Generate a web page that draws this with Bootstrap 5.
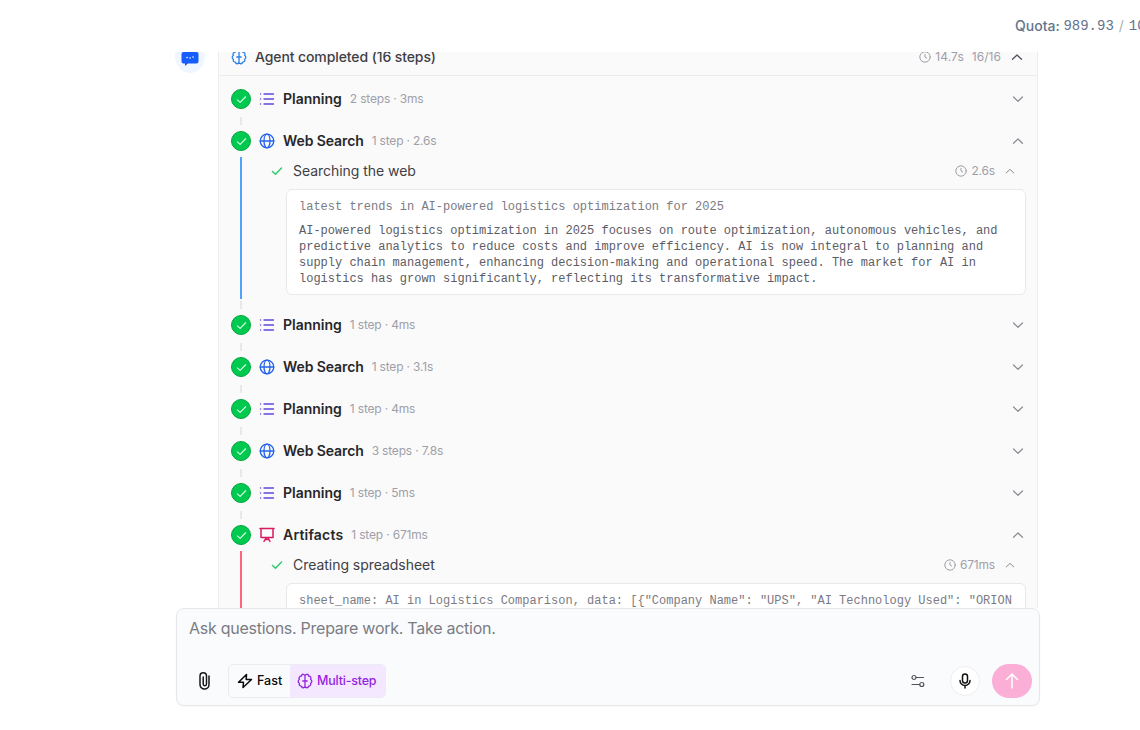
<!DOCTYPE html>
<html lang="en">
<head>
<meta charset="utf-8">
<meta name="viewport" content="width=device-width, initial-scale=1">
<title>Agent chat</title>
<link href="https://cdn.jsdelivr.net/npm/bootstrap@5.3.0/dist/css/bootstrap.min.css" rel="stylesheet">
<style>
body{font-family:Inter,"Liberation Sans",sans-serif;font-size:14px;line-height:20px;color:#3f3f46;background:#fff;height:730px;overflow:hidden}
svg{fill:none;stroke:currentColor;stroke-width:1.5;stroke-linecap:round;stroke-linejoin:round;display:block;flex:none}
.topbar{height:52px;padding-left:1015px;color:#64748b;overflow:hidden}
.topbar .num{font-family:"Liberation Mono",monospace}
.slash{color:#a8b0bb;padding:0 1px}
.feed{height:556px;padding-left:175px;overflow:hidden}
.shift-up{margin-top:-13px}
.bot{width:30px;height:34px;border-radius:50%;background:#eff6ff;margin-right:13px}
.panel{width:820px;border:1px solid #ececee;border-top:0;background:#fafafa;height:700px}
.panel-head{height:37px;padding:0 12px;border-bottom:1px solid #ececee}
.panel-head .title{letter-spacing:-.1px}
.steps{padding:13px 11px 0 12px}
.tick{width:20px;height:20px;border-radius:50%;background:#00c950;border:1px solid #00a63e;color:#dcfce7}
.tick svg{stroke-width:1.2}
.track{width:20px;margin-right:6px;flex:none}
.link-bit{width:2px;height:8px;margin:8px 0 6px;background:#e8e8ea}
.run{width:2px;flex:1;margin-top:6px;background:#51a2ff}
.run + .link-bit{margin-top:2px}
.run.red{background:#ff637e}
.head{height:20px;padding-right:2px}
.name{font-weight:600;color:#27272a;margin-left:6px;white-space:nowrap}
.name.web{letter-spacing:-.1px}
.name.artifact{letter-spacing:.2px}
.meta{font-size:12px;color:#9f9fa9;margin-left:8px;white-space:nowrap;letter-spacing:-.18px}
.panel-head .meta{letter-spacing:.05px}
.chev{color:#8b8b94;stroke-width:1.2}
.sub{height:20px;margin-top:10px;padding:0 11px 0 14px}
.sub .title{margin-left:10px;letter-spacing:-.04px}
.out{margin:8px 0 0 29px;padding:9px 12px 7px;background:#fff;border:1px solid #e9e9eb;border-radius:6px;font:12px/16px "Liberation Mono",monospace;color:#5c5c66;height:106px}
.out .q{color:#7b7b84;margin-bottom:8px;white-space:nowrap}
.group.open{height:184px}
.composer{width:864px;height:98px;margin-left:176px;border:1px solid #e5e7eb;border-radius:8px;background:#f9fbfd;padding:9px 7px 7px 12px;box-shadow:0 1px 2px rgba(0,0,0,.04)}
.ask{font-size:16px;color:#7b7b84;letter-spacing:-.26px}
.modes{height:34px;border:1px solid #ececf0;border-radius:5px;overflow:hidden;font-size:12.500px;font-weight:500;margin-left:18px}
.fast{width:61px;color:#09090b;padding-left:8px;gap:4px}
.multi{width:95px;background:#f3e8ff;color:#9524e0;padding-left:7px;gap:4px;letter-spacing:-.2px}
.mic{width:30px;height:30px;border-radius:50%;background:#fff;border:1px solid #eeeef1;color:#111;margin-right:12px}
.send{width:40px;height:34px;border-radius:17px;background:#fbaed6;color:#fff}
</style>
</head>
<body>
<svg width="0" height="0" class="position-absolute">
<symbol id="check" viewBox="0 0 12 12"><path d="M1.500 6.500 4.500 9.200 10.500 3"/></symbol>
<symbol id="list" viewBox="0 0 16 16"><path d="M5 3h9.500M5 8h9.500M5 13h9.500M1.500 3h.1M1.500 8h.1M1.500 13h.1"/></symbol>
<symbol id="globe" viewBox="0 0 16 16"><circle cx="8" cy="8" r="6.800"/><ellipse cx="8" cy="8" rx="3" ry="6.800"/><path d="M1.200 8h13.600"/></symbol>
<symbol id="board" viewBox="0 0 16 16"><path d="M1 1.500h14M2 1.500v9h12v-9M5 14.300l2.200-3.500M11 14.300l-2.200-3.500M6.200 12.500h3.600"/></symbol>
<symbol id="down" viewBox="0 0 12 8"><path d="M1.500 2 6 6.300 10.500 2"/></symbol>
<symbol id="up" viewBox="0 0 12 8"><path d="M1.500 6.300 6 2l4.500 4.300"/></symbol>
<symbol id="clock" viewBox="0 0 12 12"><circle cx="6" cy="6" r="5.200"/><path d="M6 3.300V6l1.700 1"/></symbol>
<symbol id="brain" viewBox="0 0 16 16"><path d="M8 3C8 .8 4.700.6 4.400 3 2.300 3.200 1.500 5 2.400 6.500.8 7.300.8 9.300 2.300 10.200c-.4 1.700.6 2.900 2.100 2.900C4.800 15.400 8 15.200 8 13zM8 3c0-2.200 3.300-2.400 3.600 0 2.100.2 2.900 2 2 3.500 1.600.8 1.600 2.800.1 3.700.4 1.700-.6 2.900-2.100 2.900C11.200 15.400 8 15.200 8 13M5.800 8h4.400"/></symbol>
</svg>

<header class="topbar d-flex align-items-center text-nowrap"><span class="fw-medium">Quota:&nbsp;</span><span class="num">989.93</span><span class="slash">&nbsp;/&nbsp;</span><span class="num">1000</span></header>

<main class="feed">
<div class="d-flex shift-up">
  <div class="bot d-flex justify-content-center align-items-center flex-shrink-0"><svg width="18" height="16" viewBox="0 0 18 16" class="mt-2"><path fill="#155dfc" stroke="none" d="M3 0h12.500A2 2 0 0 1 17.500 2v7.500a2 2 0 0 1-2 2H7L4 14v-2.500H2.500a2 2 0 0 1-2-2V2A2 2 0 0 1 2.500 0z"/><path stroke="#fff" d="M6 5.500h.1M9 6h.1M12 5h.1"/></svg></div>
  <section class="panel">
    <div class="panel-head d-flex align-items-center"><svg width="16" height="16" style="color:#2b7fe8;stroke-width:1.300"><use href="#brain"/></svg><span class="title fw-medium ms-2">Agent completed (16 steps)</span>
      <span class="meta ms-auto d-flex align-items-center gap-1"><svg width="12" height="12" style="stroke-width:1"><use href="#clock"/></svg>14.7s</span><span class="meta">16/16</span><svg width="12" height="12" style="color:#52525c;margin:0 2px 0 10px;stroke-width:1.300"><use href="#up"/></svg></div>
    <div class="steps">

      <div class="group d-flex"><div class="track d-flex flex-column align-items-center"><span class="tick d-flex justify-content-center align-items-center"><svg width="11" height="11"><use href="#check"/></svg></span><span class="link-bit"></span></div>
        <div class="flex-grow-1"><div class="head d-flex align-items-center"><svg width="20" height="16" style="color:#6247e0;stroke-width:1.300"><use href="#list"/></svg><span class="name">Planning</span><span class="meta">2 steps · 3ms</span><svg class="chev ms-auto" width="12" height="12"><use href="#down"/></svg></div></div></div>

      <div class="group open d-flex"><div class="track d-flex flex-column align-items-center"><span class="tick d-flex justify-content-center align-items-center"><svg width="11" height="11"><use href="#check"/></svg></span><span class="run"></span><span class="link-bit"></span></div>
        <div class="flex-grow-1"><div class="head d-flex align-items-center"><svg width="20" height="16" style="color:#2563eb;stroke-width:1.300"><use href="#globe"/></svg><span class="name web">Web Search</span><span class="meta">1 step · 2.6s</span><svg class="chev ms-auto" width="12" height="12"><use href="#up"/></svg></div>
          <div class="sub d-flex align-items-center"><svg width="12" height="12" style="color:#31c96d"><use href="#check"/></svg><span class="title">Searching the web</span><span class="meta ms-auto d-flex align-items-center gap-1"><svg width="12" height="12" style="stroke-width:1"><use href="#clock"/></svg>2.6s</span><svg class="chev" style="margin-left:10px" width="10" height="10"><use href="#up"/></svg></div>
          <div class="out"><div class="q">latest trends in AI-powered logistics optimization for 2025</div><div>AI-powered logistics optimization in 2025 focuses on route optimization, autonomous vehicles, and predictive analytics to reduce costs and improve efficiency. AI is now integral to planning and supply chain management, enhancing decision-making and operational speed. The market for AI in logistics has grown significantly, reflecting its transformative impact.</div></div></div></div>

      <div class="group d-flex"><div class="track d-flex flex-column align-items-center"><span class="tick d-flex justify-content-center align-items-center"><svg width="11" height="11"><use href="#check"/></svg></span><span class="link-bit"></span></div>
        <div class="flex-grow-1"><div class="head d-flex align-items-center"><svg width="20" height="16" style="color:#6247e0;stroke-width:1.300"><use href="#list"/></svg><span class="name">Planning</span><span class="meta">1 step · 4ms</span><svg class="chev ms-auto" width="12" height="12"><use href="#down"/></svg></div></div></div>

      <div class="group d-flex"><div class="track d-flex flex-column align-items-center"><span class="tick d-flex justify-content-center align-items-center"><svg width="11" height="11"><use href="#check"/></svg></span><span class="link-bit"></span></div>
        <div class="flex-grow-1"><div class="head d-flex align-items-center"><svg width="20" height="16" style="color:#2563eb;stroke-width:1.300"><use href="#globe"/></svg><span class="name web">Web Search</span><span class="meta">1 step · 3.1s</span><svg class="chev ms-auto" width="12" height="12"><use href="#down"/></svg></div></div></div>

      <div class="group d-flex"><div class="track d-flex flex-column align-items-center"><span class="tick d-flex justify-content-center align-items-center"><svg width="11" height="11"><use href="#check"/></svg></span><span class="link-bit"></span></div>
        <div class="flex-grow-1"><div class="head d-flex align-items-center"><svg width="20" height="16" style="color:#6247e0;stroke-width:1.300"><use href="#list"/></svg><span class="name">Planning</span><span class="meta">1 step · 4ms</span><svg class="chev ms-auto" width="12" height="12"><use href="#down"/></svg></div></div></div>

      <div class="group d-flex"><div class="track d-flex flex-column align-items-center"><span class="tick d-flex justify-content-center align-items-center"><svg width="11" height="11"><use href="#check"/></svg></span><span class="link-bit"></span></div>
        <div class="flex-grow-1"><div class="head d-flex align-items-center"><svg width="20" height="16" style="color:#2563eb;stroke-width:1.300"><use href="#globe"/></svg><span class="name web">Web Search</span><span class="meta">3 steps · 7.8s</span><svg class="chev ms-auto" width="12" height="12"><use href="#down"/></svg></div></div></div>

      <div class="group d-flex"><div class="track d-flex flex-column align-items-center"><span class="tick d-flex justify-content-center align-items-center"><svg width="11" height="11"><use href="#check"/></svg></span><span class="link-bit"></span></div>
        <div class="flex-grow-1"><div class="head d-flex align-items-center"><svg width="20" height="16" style="color:#6247e0;stroke-width:1.300"><use href="#list"/></svg><span class="name">Planning</span><span class="meta">1 step · 5ms</span><svg class="chev ms-auto" width="12" height="12"><use href="#down"/></svg></div></div></div>

      <div class="group open d-flex"><div class="track d-flex flex-column align-items-center"><span class="tick d-flex justify-content-center align-items-center"><svg width="11" height="11"><use href="#check"/></svg></span><span class="run red"></span><span class="link-bit"></span></div>
        <div class="flex-grow-1"><div class="head d-flex align-items-center"><svg width="20" height="16" style="color:#d81b60"><use href="#board"/></svg><span class="name artifact">Artifacts</span><span class="meta">1 step · 671ms</span><svg class="chev ms-auto" width="12" height="12"><use href="#up"/></svg></div>
          <div class="sub d-flex align-items-center"><svg width="12" height="12" style="color:#31c96d"><use href="#check"/></svg><span class="title">Creating spreadsheet</span><span class="meta ms-auto d-flex align-items-center gap-1"><svg width="12" height="12" style="stroke-width:1"><use href="#clock"/></svg>671ms</span><svg class="chev" style="margin-left:10px" width="10" height="10"><use href="#up"/></svg></div>
          <div class="out"><div class="q">sheet_name: AI in Logistics Comparison, data: [{"Company Name": "UPS", "AI Technology Used": "ORION</div></div></div></div>
    </div>
  </section>
</div>
</main>

<div class="composer d-flex flex-column justify-content-between">
  <div class="ask">Ask questions. Prepare work. Take action.</div>
  <div class="d-flex align-items-center">
    <svg width="12" height="20" viewBox="0 0 12 20" style="color:#18181b;margin-left:9px"><path d="M11 5v8.500a4.500 4.500 0 0 1-9 0V5a3 3 0 0 1 6.500 0v8a1.600 1.600 0 0 1-3.300 0V6"/></svg>
    <div class="modes d-flex"><div class="fast d-flex align-items-center"><svg width="16" height="16" viewBox="0 0 16 16"><path d="M9.500 1.500 1.500 9.300h5L6 14.500l8.500-8h-5.300z"/></svg>Fast</div><div class="multi d-flex align-items-center"><svg width="16" height="16" style="stroke-width:1.300"><use href="#brain"/></svg>Multi-step</div></div>
    <svg class="ms-auto" width="14" height="14" viewBox="0 0 14 14" style="color:#52525c;stroke-width:1.200;margin-right:25px"><circle cx="3" cy="3.500" r="2"/><path d="M5 3.500h7.500M1 10.500h7.500"/><circle cx="10.800" cy="10.500" r="2"/></svg>
    <div class="mic d-flex justify-content-center align-items-center"><svg width="14" height="16" viewBox="0 0 14 16"><rect x="4.500" y="1" width="5" height="9" rx="2.500"/><path d="M2 7.500a5 5 0 0 0 10 0M7 12.500V15"/></svg></div>
    <div class="send d-flex justify-content-center align-items-center"><svg width="16" height="18" viewBox="0 0 16 18"><path d="M8 16V2M2.500 7.500 8 2l5.500 5.500"/></svg></div>
  </div>
</div>
<script src="https://cdn.jsdelivr.net/npm/bootstrap@5.3.0/dist/js/bootstrap.bundle.min.js"></script>
</body>
</html>
